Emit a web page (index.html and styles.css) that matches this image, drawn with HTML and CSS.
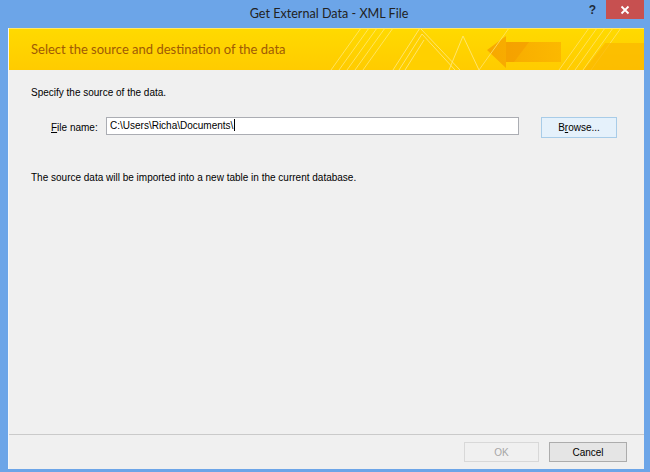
FILE: index.html
```html
<!DOCTYPE html>
<html>
<head>
<meta charset="utf-8">
<link rel="stylesheet" href="styles.css">
</head>
<body>
<div class="window">
  <div class="titlebar">
    <div class="title">Get External Data - XML File</div>
    <div class="help">?</div>
    <div class="close">
      <svg width="10" height="10" viewBox="0 0 10 10"><path d="M1.5 1.5 L8.5 8.5 M8.5 1.5 L1.5 8.5" stroke="#fff" stroke-width="1.8"/></svg>
    </div>
  </div>
  <div class="client">
    <div class="banner">
      <svg class="banner-art" width="635" height="42" viewBox="0 0 635 42" preserveAspectRatio="none">
        <defs>
          <linearGradient id="bg" x1="0" y1="0" x2="0" y2="1">
            <stop offset="0" stop-color="#FFDA00"/>
            <stop offset="1" stop-color="#FFCB00"/>
          </linearGradient>
          <linearGradient id="org" x1="0" y1="0" x2="1" y2="0">
            <stop offset="0" stop-color="#F5A000"/>
            <stop offset="1" stop-color="#FBB400"/>
          </linearGradient>
        </defs>
        <rect width="635" height="42" fill="url(#bg)"/>
        <g stroke="#FFEB80" stroke-width="1" fill="none" opacity="0.7">
          <path d="M322 42 L352 0 M330 42 L360 0 M338 42 L368 0 M346 42 L376 0 M354 42 L384 0"/>
        </g>
        <polygon points="384,42 411,0 451,42" fill="#FFD000" opacity="0.8"/>
        <g stroke="#FFEA85" stroke-width="1" fill="none" opacity="0.8">
          <path d="M384 42 L411 0 L451 42"/>
          <path d="M390 42 L413 6 L446 42"/>
          <path d="M396 42 L415 12"/>
          <path d="M440 42 L454 8 L470 42"/>
        </g>
        <polygon points="478,22 497,8 497,14 552,14 552,34 497,34 497,40" fill="url(#org)" opacity="0.85"/>
        <polygon points="497,14 520,14 505,34 497,34" fill="#F39B00" opacity="0.6"/>
        <g stroke="#FFE67A" stroke-width="1" fill="none" opacity="0.7">
          <path d="M550 42 L580 0 M558 42 L588 0 M566 42 L596 0 M574 42 L604 0 M582 42 L612 0"/>
          <path d="M470 42 L500 0"/>
        </g>
        <polygon points="575,42 596,15 635,15 635,42" fill="#FBB800" opacity="0.75"/>
        <rect y="0" width="635" height="1" fill="#FFE66A"/>
      </svg>
      <div class="banner-text">Select the source and destination of the data</div>
    </div>
    <div class="content">
      <div class="para">Specify the source of the data.</div>
      <div class="row">
        <label class="label"><u>F</u>ile name:</label>
        <div class="input">C:\Users\Richa\Documents\<span class="caret"></span></div>
        <div class="btn browse">B<u>r</u>owse...</div>
      </div>
      <div class="para second">The source data will be imported into a new table in the current database.</div>
    </div>
    <div class="footer">
      <div class="btn ok">OK</div>
      <div class="btn cancel">Cancel</div>
    </div>
  </div>
</div>
</body>
</html>
```

FILE: styles.css
```css
html, body {
  margin: 0;
  padding: 0;
}
body {
  width: 650px;
  height: 472px;
  overflow: hidden;
}
.window {
  width: 650px;
  height: 472px;
  box-sizing: border-box;
  background: #6CA5E8;
  padding: 0 6px 3px 8px;
  display: flex;
  flex-direction: column;
}
.titlebar {
  height: 28px;
  position: relative;
  flex: none;
}
.title {
  text-align: center;
  font-family: "Lato", sans-serif;
  font-size: 12.6px;
  color: #222;
  line-height: 28px;
  padding-left: 6px;
}
.help {
  position: absolute;
  right: 48px;
  top: 3px;
  font-family: "Liberation Sans", sans-serif;
  font-weight: bold;
  font-size: 12px;
  color: #1e2a3a;
}
.close {
  position: absolute;
  right: 0;
  top: 0;
  width: 38px;
  height: 19px;
  background: #C75050;
  display: flex;
  align-items: center;
  justify-content: center;
}
.client {
  flex: 1;
  background: #F0F0F0;
  display: flex;
  flex-direction: column;
  border-left: 1px solid #F4F7FB;
}
.banner {
  height: 42px;
  position: relative;
  flex: none;
}
.banner-art {
  position: absolute;
  left: 0;
  top: 0;
  width: 100%;
  height: 100%;
}
.banner-text {
  position: relative;
  font-family: "Lato", sans-serif;
  font-size: 13px;
  color: #A05A06;
  line-height: 42px;
  padding-left: 22px;
}
.content {
  flex: 1;
  padding: 17px 0 0 22px;
  font-family: "Liberation Sans", sans-serif;
  font-size: 10px;
  color: #000;
}
.para {
  line-height: 12px;
}
.row {
  display: flex;
  align-items: flex-start;
  margin-top: 18px;
  height: 21px;
}
.label {
  margin: 5px 0 0 20px;
  width: 55px;
}
.input {
  width: 408px;
  height: 16px;
  border: 1px solid #ABADB3;
  background: #fff;
  font-size: 10px;
  line-height: 16px;
  padding-left: 3px;
  box-sizing: content-box;
}
.caret {
  display: inline-block;
  width: 1px;
  height: 12px;
  background: #000;
  vertical-align: -2px;
  margin-left: 1px;
}
.btn {
  box-sizing: border-box;
  height: 21px;
  border: 1px solid #ACACAC;
  background: #E5E5E5;
  font-family: "Liberation Sans", sans-serif;
  font-size: 10px;
  display: flex;
  align-items: center;
  justify-content: center;
}
.browse {
  width: 76px;
  margin-left: 22px;
  margin-top: 0;
  background: #E5F1FB;
  border-color: #A8CCE8;
}
.second {
  margin-top: 34px;
}
.footer {
  height: 35px;
  flex: none;
  border-top: 1px solid #CACACA;
  display: flex;
  justify-content: flex-end;
  align-items: flex-start;
  padding: 7px 17px 0 0;
  box-sizing: border-box;
  gap: 10px;
}
.ok {
  width: 75px;
  height: 20px;
  color: #A6A6A6;
  background: #F0F0F0;
  border-color: #D8D8D8;
}
.cancel {
  width: 78px;
  height: 20px;
}
```
